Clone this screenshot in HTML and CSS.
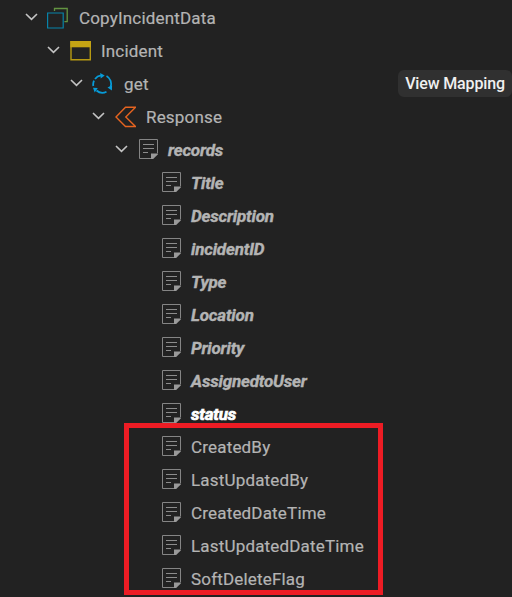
FILE: index.html
```
<!DOCTYPE html>
<html lang="en">
<head>
<meta charset="utf-8">
<title>CopyIncidentData</title>
<link rel="stylesheet" href="styles.css">
</head>
<body>
<svg class="defs" width="0" height="0" aria-hidden="true">
  <symbol id="chevron" viewBox="0 0 13 8"><path d="M1 1l5.5 5.3L12 1" fill="none" stroke="#c4c4c4" stroke-width="1.6"/></symbol>
  <symbol id="doc" viewBox="0 0 21 22"><path d="M.5 .5H18.5V14M12 19.5H.5V.5" fill="none" stroke="#858585" stroke-width="1"/><path d="M12 20v-5.5h7v.7l-4.8 4.8z" fill="#9a9a9a"/><path d="M4 5.5h11M4 9.5h11M4 13.5h5" stroke="#8c8c8c" stroke-width="1"/></symbol>
</svg>
<main class="tree">
  <div class="row l0"><svg class="chev"><use href="#chevron"/></svg><svg class="icon" viewBox="0 0 21 22"><path d="M7.5 4V1.5H20.2v13.1h-2.8" fill="none" stroke="#639442" stroke-width="1.3"/><path d="M.6 6h15.6v15H.6z" fill="none" stroke="#0783a9" stroke-width="1.2"/></svg><span>CopyIncidentData</span></div>
  <div class="row l1"><svg class="chev"><use href="#chevron"/></svg><svg class="icon" viewBox="0 0 21 22"><path d="M1 1.8h19.3v18H1z" fill="none" stroke="#b79a12" stroke-width="1.4"/><path d="M.3 1H21v6.3H.3z" fill="#c4a414"/></svg><span>Incident</span></div>
  <div class="row l2"><svg class="chev"><use href="#chevron"/></svg><svg class="icon" viewBox="0 0 21 22"><g fill="none" stroke="#079bd8" stroke-width="1.8"><path d="M3 6A9 9 0 0 1 9 2.4"/><path d="M14.5 3A9 9 0 0 1 18.6 14"/><path d="M14.5 18.8A9 9 0 0 1 4.5 17.5"/><path d="M1.3 13A9 9 0 0 1 2 7.6"/></g><path d="M8.2 0l4.5 2.6-4 3zM20.1 12.2l-.2 5.3-4.4-3zM1 14.8l4.8.3-3.1 4.4z" fill="#079bd8"/></svg><span>get</span><button class="mapping">View Mapping</button></div>
  <div class="row l3"><svg class="chev"><use href="#chevron"/></svg><svg class="icon" viewBox="0 0 21 22"><path d="M10.5 1.2h10L10.8 11l9.7 9.5h-10L1 11z" fill="none" stroke="#e66420" stroke-width="1.4"/></svg><span>Response</span></div>
  <div class="row l4 mapped"><svg class="chev"><use href="#chevron"/></svg><svg class="icon"><use href="#doc"/></svg><span>records</span></div>
  <div class="row leaf mapped"><svg class="icon"><use href="#doc"/></svg><span>Title</span></div>
  <div class="row leaf mapped"><svg class="icon"><use href="#doc"/></svg><span>Description</span></div>
  <div class="row leaf mapped"><svg class="icon"><use href="#doc"/></svg><span>incidentID</span></div>
  <div class="row leaf mapped"><svg class="icon"><use href="#doc"/></svg><span>Type</span></div>
  <div class="row leaf mapped"><svg class="icon"><use href="#doc"/></svg><span>Location</span></div>
  <div class="row leaf mapped"><svg class="icon"><use href="#doc"/></svg><span>Priority</span></div>
  <div class="row leaf mapped"><svg class="icon"><use href="#doc"/></svg><span>AssignedtoUser</span></div>
  <div class="row leaf mapped active"><svg class="icon"><use href="#doc"/></svg><span>status</span></div>
  <div class="row leaf"><svg class="icon"><use href="#doc"/></svg><span>CreatedBy</span></div>
  <div class="row leaf"><svg class="icon"><use href="#doc"/></svg><span>LastUpdatedBy</span></div>
  <div class="row leaf"><svg class="icon"><use href="#doc"/></svg><span>CreatedDateTime</span></div>
  <div class="row leaf"><svg class="icon"><use href="#doc"/></svg><span>LastUpdatedDateTime</span></div>
  <div class="row leaf"><svg class="icon"><use href="#doc"/></svg><span>SoftDeleteFlag</span></div>
  <div class="highlight"></div>
</main>
</body>
</html>
```
FILE: styles.css
```
* { box-sizing: border-box; }
body {
  margin: 0;
  height: 597px;
  overflow: hidden;
  background: #222222;
  color: #b4b4b4;
  font: 400 17px/33px Roboto, sans-serif;
  letter-spacing: 0.18px;
}
.defs { position: absolute; }
.tree { position: relative; padding-top: 1px; height: 597px; overflow: hidden; }
.row { display: flex; align-items: center; height: 33px; white-space: nowrap; }
.row span { padding-top: 2px; -webkit-text-stroke: 0.2px currentColor; }
.l0 { padding-left: 25px; }
.l1 { padding-left: 47px; }
.l2 { padding-left: 70px; }
.l3 { padding-left: 92px; }
.l4 { padding-left: 115px; }
.leaf { padding-left: 162px; }
.chev { width: 13px; height: 8px; margin-right: 9px; margin-bottom: 2px; flex: none; }
.icon { width: 21px; height: 22px; margin-right: 10px; flex: none; }
.l1 .icon, .l3 .icon { margin-left: 1px; }
.l0 .icon, .l2 .icon { margin-right: 11px; }
.l4 .icon, .leaf .icon { margin-right: 8px; }
.l4 .icon { margin-left: 2px; }
.mapped { font-weight: 700; font-style: italic; letter-spacing: -0.18px; }
.row.mapped span { -webkit-text-stroke: 0.4px currentColor; }
.active { color: #ffffff; }
.row.active span { -webkit-text-stroke: 0.7px currentColor; }
.mapping {
  margin-left: auto;
  width: 114px;
  height: 27px;
  padding: 0;
  border: 0;
  border-radius: 6px;
  background: #303030;
  color: #f0f0f0;
  font: 500 16px/27px Roboto, sans-serif;
  letter-spacing: -0.15px;
}
.highlight {
  position: absolute;
  left: 124px;
  top: 423px;
  width: 259px;
  height: 172px;
  border: 5px solid #ed1c24;
}
```
